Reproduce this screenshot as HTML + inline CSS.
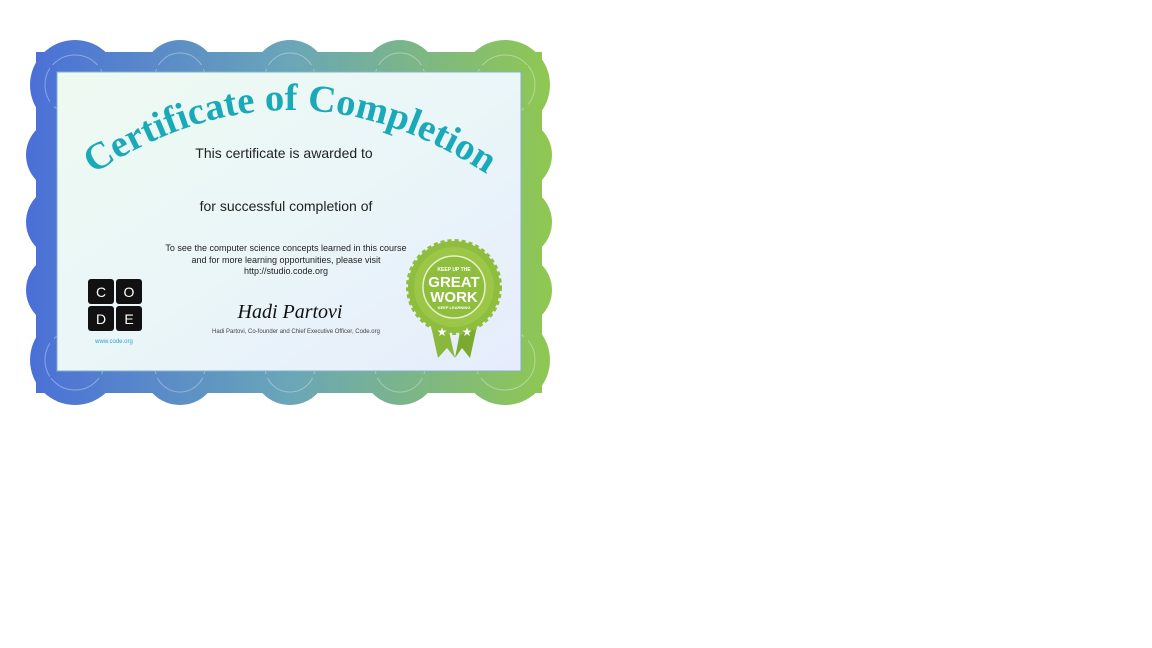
<!DOCTYPE html>
<html><head><meta charset="utf-8"><style>
html,body{margin:0;padding:0;background:#fff;width:1152px;height:648px;overflow:hidden}
svg{position:absolute;left:0;top:0}
</style></head><body>
<svg width="1152" height="648" viewBox="0 0 1152 648">
<defs>
<linearGradient id="g" gradientUnits="userSpaceOnUse" x1="26" x2="554" y1="0" y2="0">
<stop offset="0" stop-color="#4a6fd8"/><stop offset="0.5" stop-color="#6aa6b8"/><stop offset="1" stop-color="#90c850"/>
</linearGradient>
<linearGradient id="p" x1="0" x2="1" y1="0" y2="1">
<stop offset="0" stop-color="#eefaf0"/><stop offset="0.5" stop-color="#eaf6f8"/><stop offset="1" stop-color="#e6ecfc"/>
</linearGradient>
<path id="arc" d="M92,175 Q290,45 488,175"/>
</defs>
<g fill="url(#g)">
<rect x="36" y="52" width="506" height="341"/>
<circle cx="75" cy="85" r="45"/><circle cx="180" cy="78" r="38"/><circle cx="290" cy="78" r="38"/><circle cx="400" cy="78" r="38"/><circle cx="505" cy="85" r="45"/>
<circle cx="75" cy="360" r="45"/><circle cx="180" cy="367" r="38"/><circle cx="290" cy="367" r="38"/><circle cx="400" cy="367" r="38"/><circle cx="505" cy="360" r="45"/>
<circle cx="62" cy="155" r="36"/><circle cx="62" cy="222" r="36"/><circle cx="62" cy="290" r="36"/>
<circle cx="516" cy="155" r="36"/><circle cx="516" cy="222" r="36"/><circle cx="516" cy="290" r="36"/>
</g>
<g fill="none" stroke="#fff" stroke-opacity="0.35" stroke-width="1">
<circle cx="75" cy="85" r="30"/><circle cx="180" cy="78" r="25"/><circle cx="290" cy="78" r="25"/><circle cx="400" cy="78" r="25"/><circle cx="505" cy="85" r="30"/>
<circle cx="75" cy="360" r="30"/><circle cx="180" cy="367" r="25"/><circle cx="290" cy="367" r="25"/><circle cx="400" cy="367" r="25"/><circle cx="505" cy="360" r="30"/>
</g>
<rect x="52" y="67" width="474" height="309" fill="none" stroke="url(#g)" stroke-width="4"/>
<rect x="57" y="72" width="464" height="299" fill="url(#p)" stroke="#7fb0c8" stroke-width="1"/>
<text font-family="Liberation Serif,serif" font-weight="bold" font-size="38" fill="#1aa9b8"><textPath href="#arc" startOffset="50%" text-anchor="middle" textLength="420" lengthAdjust="spacingAndGlyphs">Certificate of Completion</textPath></text>
<g font-family="Liberation Sans,sans-serif" fill="#222" text-anchor="middle">
<text x="284" y="158" font-size="14">This certificate is awarded to</text>
<text x="286" y="211" font-size="14">for successful completion of</text>
<text x="286" y="251" font-size="9">To see the computer science concepts learned in this course</text>
<text x="286" y="263" font-size="9">and for more learning opportunities, please visit</text>
<text x="286" y="274" font-size="9">http://studio.code.org</text>
<text x="296" y="333" font-size="6" fill="#444">Hadi Partovi, Co-founder and Chief Executive Officer, Code.org</text>
<text x="290" y="318" font-family="Liberation Serif,serif" font-style="italic" font-size="20" fill="#111">Hadi Partovi</text>
</g>
<g font-family="Liberation Sans,sans-serif" font-size="14" fill="#fff" text-anchor="middle">
<rect x="88" y="279" width="26" height="25" rx="3" fill="#111"/><rect x="116" y="279" width="26" height="25" rx="3" fill="#111"/>
<rect x="88" y="306" width="26" height="25" rx="3" fill="#111"/><rect x="116" y="306" width="26" height="25" rx="3" fill="#111"/>
<text x="101" y="297">C</text><text x="129" y="297">O</text><text x="101" y="324">D</text><text x="129" y="324">E</text>
<text x="114" y="343" font-size="6" fill="#2aa6c8">www.code.org</text>
</g>
<g>
<polygon points="423,290 440,290 455,358 447,348 438,358" fill="#8ab83c"/>
<polygon points="468,290 485,290 470,358 462,348 455,358" fill="#7aaa30"/>
<circle cx="454" cy="287" r="46" fill="#8fbd3e" stroke="#8fbd3e" stroke-width="4" stroke-dasharray="4 3"/>
<circle cx="454" cy="287" r="40" fill="#9cc648"/>
<circle cx="454" cy="287" r="31" fill="#8fbd3e" stroke="#e8f0c8" stroke-width="1.5"/>
<g font-family="Liberation Sans,sans-serif" font-weight="bold" fill="#fff" text-anchor="middle">
<text x="454" y="271" font-size="5">KEEP UP THE</text>
<text x="454" y="287" font-size="15">GREAT</text>
<text x="454" y="302" font-size="15">WORK</text>
<text x="454" y="309" font-size="4">KEEP LEARNING</text>
</g>
<text x="442" y="336" font-size="12" fill="#fff" text-anchor="middle">★</text>
<text x="467" y="336" font-size="12" fill="#fff" text-anchor="middle">★</text>
</g>
</svg>
</body></html>
